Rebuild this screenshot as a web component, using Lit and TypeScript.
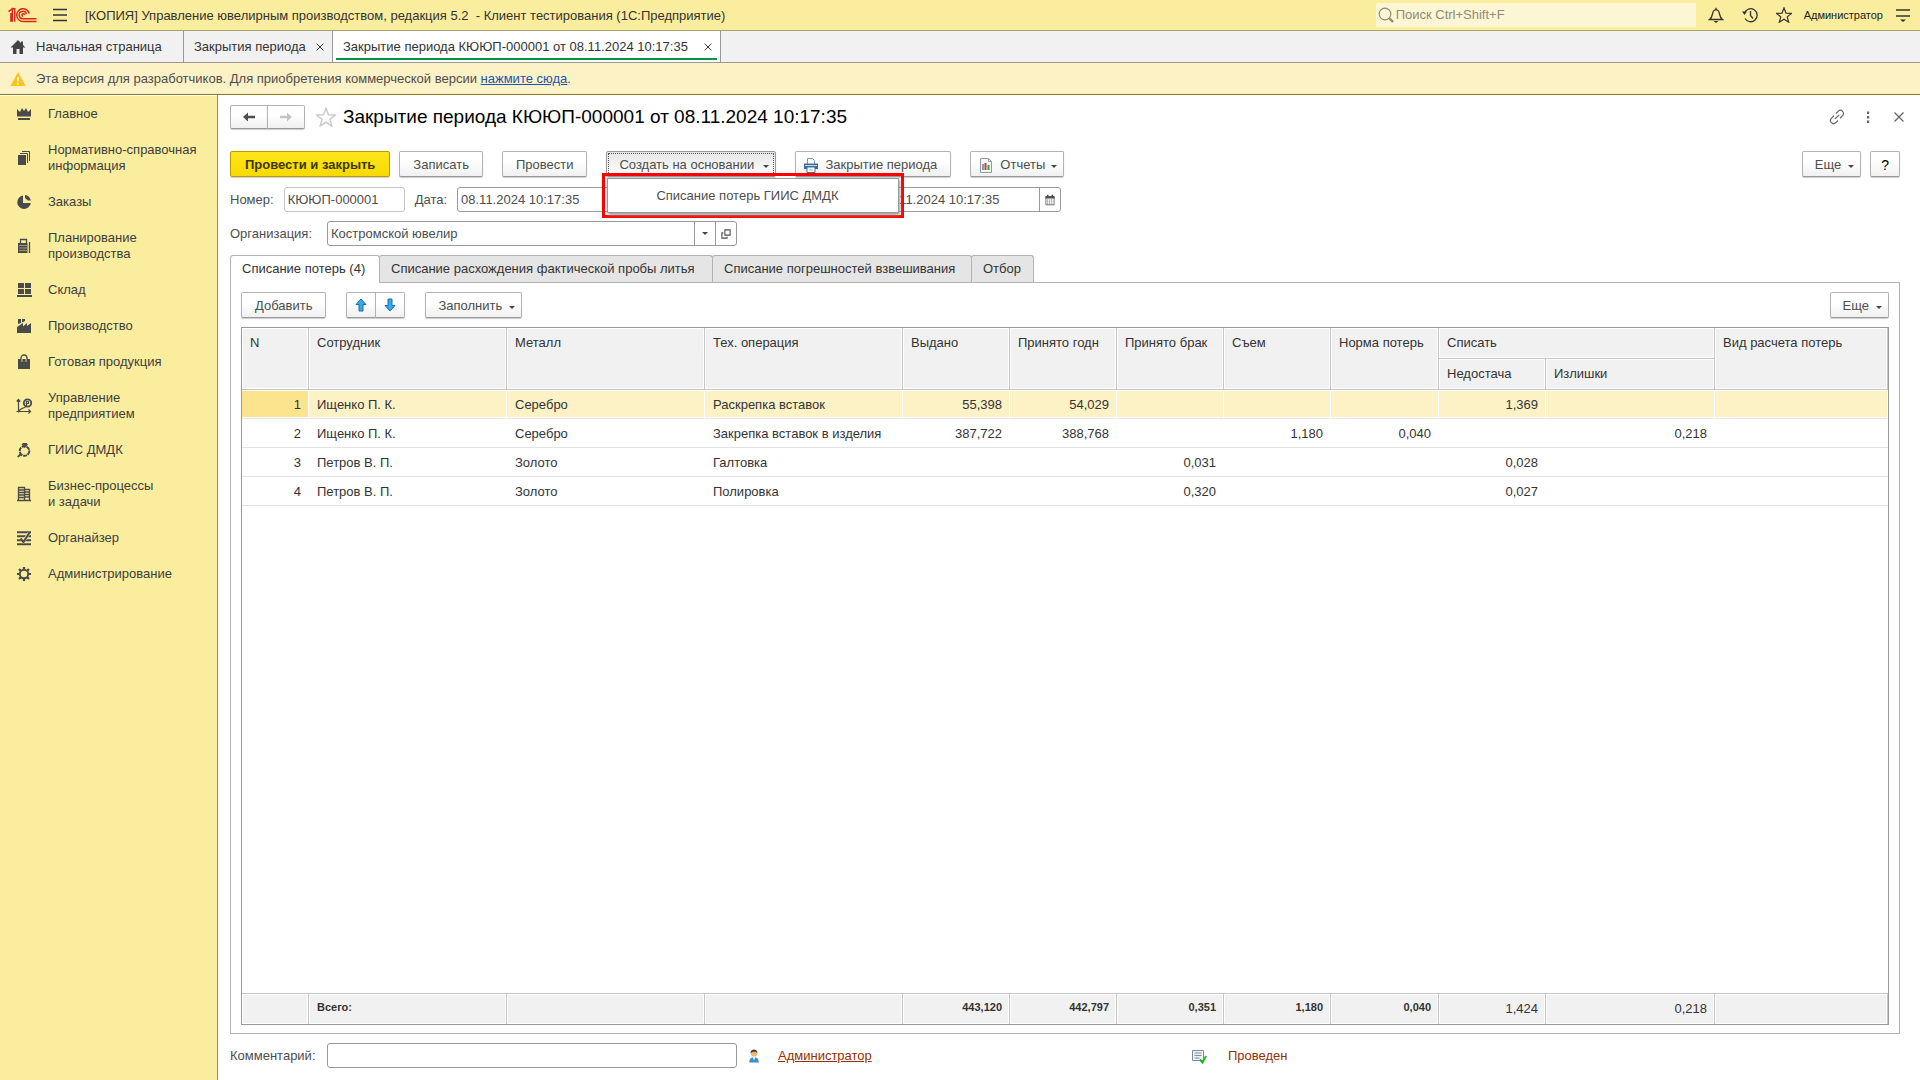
import { LitElement, html, css, svg, nothing, TemplateResult } from "lit";
import { customElement, property } from "lit/decorators.js";
import { classMap } from "lit/directives/class-map.js";

const glyphs: Record<string, TemplateResult> = {
  crown: svg`<path d="M1 3l3 3 2-4 2 3 2-3 2 4 3-3v7.500H1z"/><path d="M2 12h12v2H2z"/>`,
  files: svg`<path d="M2 5h8v10H2z"/><path d="M4 3.500h7.500V13M6 1.500h7.500V11" fill="none" stroke="currentColor"/>`,
  pie: svg`<path d="M7 1.500A6.800 6.800 0 1 0 14.800 9H7z"/><path d="M9 1c3 .3 5.300 2.600 5.800 5.500H12L9 4z"/>`,
  register: svg`<path d="M4.500 5V1.500h6V5M13.500 4v11" fill="none" stroke="currentColor" stroke-width="1.300"/><path d="M2 5h9.500v10H2z"/><path d="M3.500 7.500h7M3.500 10h7M3.500 12.500h7" stroke="#fbed9e" stroke-dasharray="1 1"/>`,
  blocks: svg`<path d="M2 1h6v5H2zM9 1h6v5H9zM2 7h6v5H2zM9 7h6v5H9zM1 13h15v2H1z"/>`,
  factory: svg`<path d="M2 1h3v4l-3 1zM6 1h3v2L6 4.500zM1 9l6-4v3.500L11 5v3l4-3v10H1z"/>`,
  bag: svg`<path d="M2 5h12v10H2z"/><path d="M5 6V4a3 3 0 0 1 6 0v2" fill="none" stroke="currentColor" stroke-width="1.300"/><path d="M6 5v3M10 5v3" stroke="#fbed9e" stroke-width=".8"/>`,
  chart: svg`<path d="M2.500 1.500v13M0.500 13.500H14M2.500 13c2-2 4-3 7-4M.8 3.500l1.700-2 1.700 2M12.500 11.500l2 2-2 2" fill="none" stroke="currentColor" stroke-width="1.200"/><circle cx="11.500" cy="5" r="3.700" fill="none" stroke="currentColor" stroke-width="1.800"/><path d="M10.500 8V3.500h2v2h-3" fill="none" stroke="currentColor" stroke-width="1.200"/>`,
  ring: svg`<circle cx="8.500" cy="9" r="4.800" fill="none" stroke="currentColor" stroke-width="2" stroke-dasharray="4 .8"/><path d="M5.500 2.500L7 1h3.500L12 2.500 8.700 6zM1 14.500L4.500 11l1.500 1.500-3.500 3z"/>`,
  building: svg`<path d="M2.500 14.500v-13h6v13M8.500 3.500h5v11M1 14.500h14M3 4h5M3 6.500h5M3 9h5M3 11.500h5M9 6h4M9 8.500h4M9 11h4" fill="none" stroke="currentColor" stroke-width="1.300"/>`,
  organizer: svg`<path d="M1 2.200h14M1 6.200h14M1 10.200h14M1 14.200h14" stroke="currentColor" stroke-width="2"/><path d="M5 8.500l2.500 3L13 3" fill="none" stroke="#fbed9e" stroke-width="3"/><path d="M4.500 8.500l3 3.500L13.500 2.500" fill="none" stroke="currentColor" stroke-width="2"/>`,
  gear: svg`<circle cx="8" cy="8" r="4.200" fill="none" stroke="currentColor" stroke-width="1.900"/><path d="M8 1v3M8 12v3M1 8h3M12 8h3M3 3l2 2M11 11l2 2M13 3l-2 2M5 11l-2 2" stroke="currentColor" stroke-width="2.200"/>`,
  home: svg`<path d="M8 1L.5 8.500H3V15h3.500v-5h3v5H13V8.500h2.500L13 6V2.500h-2V4z"/>`,
  warning: svg`<path d="M8 1l7.500 14H.5z" fill="#fcc419"/><path d="M8 6v4.500M8 12v1.600" stroke="#fff" stroke-width="1.500"/>`,
  burger: svg`<path d="M1 2.500h14M1 8h14M1 13.500h14" stroke="currentColor" stroke-width="1.300"/>`,
  search: svg`<circle cx="7" cy="7" r="5.800" fill="none" stroke="currentColor" stroke-width="1.200"/><path d="M11 11l4 4" stroke="currentColor" stroke-width="2.400"/>`,
  bell: svg`<path d="M1.500 12.500h13c-2-1.500-2.500-3-3-5.500-.3-2.500-1.300-4-3.500-4.300C5.800 3 4.800 4.500 4.500 7c-.5 2.500-1 4-3 5.500zM8 .8v2" fill="none" stroke="currentColor" stroke-width="1.300"/><path d="M5.500 14h5L8 16z"/>`,
  history: svg`<path d="M2.500 6A6.500 6.500 0 1 1 3 11.500M8.500 4v4.500l2.500 3" fill="none" stroke="currentColor" stroke-width="1.300"/><path d="M0 4.500h5L2.500 8z"/>`,
  star: svg`<path d="M8 1l2 5.200 5.500.2-4.300 3.500 1.500 5.300L8 12.200l-4.700 3 1.500-5.300L.5 6.400l5.500-.2z" fill="none" stroke="currentColor" stroke-width="1.200"/>`,
  menu: svg`<path d="M1 3h14M1 9h14" stroke="currentColor" stroke-width="1.300"/><path d="M5 12.500h6L8 15z"/>`,
  link: svg`<path d="M7 4.500l2.200-2.200a3 3 0 0 1 4.400 4.400L11 9.200M9 11.500l-2.200 2.200a3 3 0 0 1-4.400-4.400L5 6.800M5.800 10.200l4.400-4.400" fill="none" stroke="currentColor" stroke-width="1.200"/>`,
  dots: svg`<path d="M7 2.500h2.200v2.500H7zM7 7h2.200v2.500H7zM7 11.500h2.200V14H7z"/>`,
  close: svg`<path d="M3.500 3.500l9 9M12.500 3.500l-9 9" stroke="currentColor" stroke-width="1.300"/>`,
  left: svg`<path d="M2 8l5-4.500v3.300h7v2.400H7v3.300z"/>`,
  right: svg`<path d="M14 8L9 3.500v3.300H2v2.400h7v3.300z"/>`,
  up: svg`<path d="M8 2l5 5.500h-3V14H6V7.500H3z" fill="#38a9e8" stroke="#1b6fa8"/>`,
  down: svg`<path d="M8 14l5-5.500h-3V2H6v6.500H3z" fill="#38a9e8" stroke="#1b6fa8"/>`,
  printer: svg`<path d="M4.500 7V1.500h5l2 2V7" fill="#fff" stroke="#7d93a8"/><path d="M1 6.500h14V12H1z" fill="#3f6c97"/><path d="M2 8.500h12" stroke="#c7d6e4"/><path d="M4 10h8v5.500H4z" fill="#fff" stroke="#3f6c97"/><path d="M6 13h4" stroke="#9bb"/>`,
  report: svg`<path d="M2.500 1.500h8l3 3v11h-11z" fill="#f4f7fa" stroke="#8b9aab"/><path d="M10.500 1.500v3h3" fill="none" stroke="#8b9aab"/><path d="M5 7v6" stroke="#4a5a6a" stroke-width="1.200"/><path d="M7.500 6V13" stroke="#d33" stroke-width="2"/><path d="M10.500 8v5" stroke="#2a3" stroke-width="2"/>`,
  calendar: svg`<path d="M2.500 3.500h11v11h-11z" fill="none" stroke="currentColor"/><path d="M2 3h12v3H2zM4 1h2v3H4zM10 1h2v3h-2z"/><path d="M4 8h8M4 10.500h8M4 13h8" stroke="currentColor" stroke-dasharray="1.500 1"/>`,
  open: svg`<path d="M6.500 2.500h7v7h-7zM4.500 6.500h-2v7h7v-2" fill="none" stroke="currentColor" stroke-width="1.400"/>`,
  person: svg`<path d="M2.500 15.500c0-4 2-6 5.500-6s5.500 2 5.500 6z" fill="#3b8fc4"/><path d="M6.500 9.500L8 13l1.500-3.500z" fill="#fff"/><circle cx="8" cy="5" r="3.600" fill="#e9b872"/><path d="M4 5c-.3-6 8.300-6 8 0-1-2.500-6.500-2.500-8 0z" fill="#4b3a2c"/>`,
  posted: svg`<path d="M1.500 2.500h11v10h-11z" fill="#eef2f6" stroke="#7d8ea3"/><path d="M3.500 5h7M3.500 7.500h7M3.500 10h5" stroke="#7d8ea3"/><path d="M9 11.500l2.500 3 3.500-6.500" fill="none" stroke="#22b52c" stroke-width="2"/>`,
};

@customElement("ui-icon")
class UiIcon extends LitElement {
  static styles = css`
    :host { display: inline-flex; flex: none; width: 16px; height: 16px; }
    .glyph { width: 100%; height: 100%; fill: currentColor; }
  `;
  @property() name = "";
  render() {
    return html`<svg class="glyph" viewBox="0 0 16 16" aria-hidden="true">${glyphs[this.name]}</svg>`;
  }
}

interface Section { icon: string; lines: string[]; }

const sections: Section[] = [
  { icon: "crown", lines: ["Главное"] },
  { icon: "files", lines: ["Нормативно-справочная", "информация"] },
  { icon: "pie", lines: ["Заказы"] },
  { icon: "register", lines: ["Планирование", "производства"] },
  { icon: "blocks", lines: ["Склад"] },
  { icon: "factory", lines: ["Производство"] },
  { icon: "bag", lines: ["Готовая продукция"] },
  { icon: "chart", lines: ["Управление", "предприятием"] },
  { icon: "ring", lines: ["ГИИС ДМДК"] },
  { icon: "building", lines: ["Бизнес-процессы", "и задачи"] },
  { icon: "organizer", lines: ["Органайзер"] },
  { icon: "gear", lines: ["Администрирование"] },
];

const columnClasses = ["c-n", "c-text", "c-text", "c-text", "c-num", "c-num", "c-num", "c-num", "c-norm", "c-num", "c-extra", "c-kind"];
const headers = ["N", "Сотрудник", "Металл", "Тех. операция", "Выдано", "Принято годн", "Принято брак", "Съем", "Норма потерь"];
const rows = [
  ["1", "Ищенко П. К.", "Серебро", "Раскрепка вставок", "55,398", "54,029", "", "", "", "1,369", "", ""],
  ["2", "Ищенко П. К.", "Серебро", "Закрепка вставок в изделия", "387,722", "388,768", "", "1,180", "0,040", "", "0,218", ""],
  ["3", "Петров В. П.", "Золото", "Галтовка", "", "", "0,031", "", "", "0,028", "", ""],
  ["4", "Петров В. П.", "Золото", "Полировка", "", "", "0,320", "", "", "0,027", "", ""],
];
const totals = ["", "Всего:", "", "", "443,120", "442,797", "0,351", "1,180", "0,040", "1,424", "0,218", ""];
const isNumeric = (column: number) => column === 0 || (column > 3 && column < 11);

@customElement("app-root")
class AppRoot extends LitElement {
  static styles = css`
    :host {
      display: flex; flex-direction: column; min-height: 100vh; background: #fff;
      font: 13px/16px "Liberation Sans", Arial, sans-serif; color: #333;
    }
    * { box-sizing: border-box; }
    button, input { font: inherit; color: inherit; margin: 0; }
    button { cursor: pointer; white-space: nowrap; }
    .plain { display: inline-flex; align-items: center; justify-content: center; padding: 0; border: 0; background: none; }

    .titlebar { display: flex; align-items: center; height: 31px; padding: 0 9px 0 8px; background: #fbed9e; border-bottom: 1px solid #a9a468; }
    .logo { width: 29px; height: 16px; flex: none; }
    .titlebar .burger { margin-left: 15px; }
    .app-name { margin: 0 auto 0 17px; padding-top: 1px; white-space: pre; font-size: 13px; font-weight: 400; }
    .search { display: flex; align-items: center; gap: 2px; width: 320px; height: 24px; margin: 0 12px; margin-bottom: 1px; padding-left: 2px; border-radius: 2px; background: #fdf6d4; color: #8f8b77; }
    .search input { flex: 1; min-width: 0; padding: 0; border: 0; outline: 0; background: none; }
    .search input::placeholder { color: #8f8b77; opacity: 1; }
    .tools { display: flex; align-items: center; gap: 18px; }
    .user { margin-right: 12px; margin-left: 12px; font-size: 11px; color: #222; }

    .pages { display: flex; height: 32px; background: #f1f1f1; border-bottom: 1px solid #999; }
    .page { display: flex; align-items: center; justify-content: space-between; gap: 8px; min-width: 149px; padding: 0 6px 0 10px; border-right: 1px solid #999; white-space: nowrap; }
    .page.home { justify-content: flex-start; gap: 10px; min-width: 184px; }
    .page.home ui-icon { color: #444; }
    .page.active { min-width: 388px; background: linear-gradient(#009646, #009646) center 27px / calc(100% - 6px) 2px no-repeat #fff; }
    .page .shut ui-icon { width: 12px; height: 12px; }

    .notice { display: flex; align-items: center; gap: 10px; height: 32px; padding: 0 10px; background: #fdf1c6; border-bottom: 1px solid #8f7a20; color: #4d4d4d; }
    .notice a { color: #1c55ae; }

    .body { flex: 1; display: flex; }
    .sidebar { flex: none; width: 218px; padding-top: 1px; background: #fbed9e; border-right: 1px solid #999468; box-shadow: inset 0 1px #fff; }
    .section { display: flex; align-items: center; gap: 16px; padding: 10px 8px 10px 16px; color: #3d3d3d; text-decoration: none; white-space: nowrap; }
    .section ui-icon { color: #4a4a4a; }
    .section .line { display: block; }

    .main { flex: 1; min-width: 0; display: flex; flex-direction: column; padding: 10px 20px 12px 12px; color: #4d4d4d; }
    .heading { display: flex; align-items: center; height: 24px; margin: 0 -7px 22px 0; }
    .heading h1 { margin: 0 auto 0 7px; font-size: 19px; font-weight: 400; line-height: 24px; color: #000; }
    .heading .fav { margin-left: 11px; color: #ccc; }
    .heading .fav ui-icon { width: 20px; height: 20px; }
    .corner { display: flex; gap: 15px; color: #666; }

    .btn { display: inline-flex; align-items: center; height: 26px; padding: 1px 13px 0; border: 1px solid #b3b3b3; border-bottom-color: #999; border-radius: 2px; background: linear-gradient(#fff 40%, #f0f0f0); box-shadow: 0 1px 1px #ccc; color: #4d4d4d; }
    .btn.primary { padding: 1px 14px 0; background: linear-gradient(#ffe61a, #f7da00); border-color: #b39d00; font-weight: 700; color: #3d3600; }
    .btn.drop { justify-content: space-between; gap: 7px; padding-left: 12px; padding-right: 6px; }
    .btn.drop::after { content: ""; border: 3px solid transparent; border-top-color: #444; border-bottom: 0; margin-top: 3px; }
    .btn.pressed { min-width: 170px; background: linear-gradient(#e6e6e6, #fff); border-color: #999; outline: 1px dotted #555; outline-offset: -3px; }
    .btn.iconic { padding-left: 7px; gap: 6px; }
    .btn.narrow { padding: 1px 10px 0; color: #000; font-size: 14px; }
    .pair { display: flex; }
    .pair .btn { padding: 0 6px; width: 38px; justify-content: center; }
    .pair .btn:first-child { border-top-right-radius: 0; border-bottom-right-radius: 0; }
    .pair .btn:last-child { margin-left: -1px; border-top-left-radius: 0; border-bottom-left-radius: 0; }
    .pair.small .btn { width: 30px; }
    .heading .pair .btn { height: 24px; }
    .btn.disabled { color: #c4c4c4; }

    .commands { display: flex; gap: 19px; margin-bottom: 10px; }
    .commands .group { display: flex; gap: 9px; }
    .commands .end { margin-left: auto; }
    .anchor { position: relative; display: flex; }
    .frame { position: absolute; z-index: 2; top: 22px; left: -4px; width: 302px; padding: 2px; border: 3px solid #f00; }
    .menu { height: 35px; border: 1px solid #999; background: #fff; box-shadow: 1px 2px 3px #999; display: flex; }
    .menu button { flex: 1; justify-content: flex-start; padding: 0 48px; }

    .fields { display: flex; align-items: center; height: 25px; margin-bottom: 9px; }
    .fields label { flex: none; }
    .box { display: flex; height: 25px; border: 1px solid #999; border-radius: 3px; background: #fff; overflow: hidden; }
    .box.readonly { border-color: #c6c6c6; }
    .box input { flex: 1; min-width: 0; padding: 0 3px; border: 0; outline: 0; background: none; }
    .box button { width: 21px; border-left: 1px solid #999; }
    .box button ui-icon { width: 12px; height: 12px; }
    .number { width: 121px; margin: 0 10px 0 10px; }
    .date { width: 184px; margin-left: 10px; }
    .date.second { margin-left: 236px; }
    .wide { width: 410px; }
    .lead { width: 97px; }
    .caret { border: 3px solid transparent; border-top-color: #444; border-bottom: 0; }

    .tabs { display: flex; height: 28px; margin-bottom: -1px; }
    .tab { height: 27px; margin-right: -1px; padding: 0 11px; border: 1px solid #b3b3b3; border-bottom: 0; border-radius: 3px 3px 0 0; background: #e5e5e5; color: #333; text-align: left; }
    .tab.active { position: relative; z-index: 1; height: 28px; min-width: 150px; padding-bottom: 1px; background: #fff; }
    .tab.probe { min-width: 334px; }
    .tab.weighing { min-width: 260px; }
    .tab.filter { min-width: 63px; }
    .panel { flex: 1; display: flex; flex-direction: column; gap: 9px; margin-bottom: 9px; padding: 9px 10px 8px; border: 1px solid #b3b3b3; }
    .panel .commands { gap: 20px; margin: 0; }

    .grid-wrap { flex: 1; display: grid; border: 1px solid #999; }
    table { width: 100%; table-layout: fixed; border-collapse: separate; border-spacing: 0; color: #333; }
    .c-n { width: 67px; } .c-text { width: 198px; } .c-num { width: 107px; } .c-norm { width: 108px; } .c-extra { width: 169px; }
    th, td { padding: 0 8px; font-weight: 400; text-align: left; white-space: nowrap; overflow: hidden; }
    th, tfoot td { background: #f1f1f1; border-right: 1px solid #c6c6c6; box-shadow: inset 0 0 0 1px #fff; }
    th { height: 31px; padding: 7px 8px 5px; vertical-align: top; border-bottom: 1px solid #c6c6c6; }
    tbody td { height: 29px; padding-top: 1px; border-bottom: 1px solid #e3e3e3; }
    tbody td.num, tfoot td.num { text-align: right; }
    tr.current td { padding-right: 7px; background: #fdf1c6; border-right: 1px solid #fff; box-shadow: inset 0 1px #fff, inset 0 -1px #fff; }
    tr.current td:first-child { background: #fbe48d; }
    tbody tr.rest td { height: auto; border: 0; }
    tfoot td { height: 31px; padding: 0 7px 5px 8px; border-top: 1px solid #c6c6c6; font-size: 11px; font-weight: 700; }
    tfoot td.light { padding-bottom: 0; font-size: 13px; font-weight: 400; }

    .footer { display: flex; align-items: center; height: 25px; }
    .footer ui-icon { width: 14px; height: 14px; }
    .footer .author { display: flex; align-items: center; gap: 17px; width: 443px; margin-left: 10px; }
    .footer a, .footer .state { color: #963000; }
    .footer .status { display: flex; align-items: center; gap: 20px; }
    .footer .status ui-icon { width: 18px; height: 16px; }
  `;

  private section(item: Section) {
    return html`<a class="section" href="#"><ui-icon name=${item.icon}></ui-icon>
      <span>${item.lines.map((line) => html`<span class="line">${line}</span>`)}</span></a>`;
  }

  private row(cells: string[], index: number) {
    return html`<tr class=${classMap({ current: index === 0 })}>
      ${cells.map((cell, column) => html`<td class=${classMap({ num: isNumeric(column) })}>${cell}</td>`)}
    </tr>`;
  }

  private pageTab(title: string, active = false) {
    return html`<div class=${classMap({ page: true, active })}>
      <button class="plain">${title}</button>
      <button class="plain shut" aria-label="Закрыть"><ui-icon name="close"></ui-icon></button>
    </div>`;
  }

  render() {
    return html`
      <header class="titlebar">
        <svg class="logo" viewBox="0 0 30 16" role="img" aria-label="1С" fill="none" stroke="#d9261c" stroke-width="1.500">
          <path d="M.5 4.500L4.500 1.500V15M3 15V6M7 15V1.500H4.500" />
          <path d="M22 6.500a6.600 6.600 0 1 0-6.500 8.200H29.500" />
          <path d="M19 7a3.800 3.800 0 1 0-3.500 4.800H29.500" />
          <path d="M17 8.200a1.300 1.300 0 1 0-1.300 1" />
        </svg>
        <button class="plain burger" aria-label="Меню"><ui-icon name="burger"></ui-icon></button>
        <h2 class="app-name">[КОПИЯ] Управление ювелирным производством, редакция 5.2  - Клиент тестирования (1С:Предприятие)</h2>
        <div class="search"><ui-icon name="search"></ui-icon><input type="search" aria-label="Поиск" placeholder="Поиск Ctrl+Shift+F" /></div>
        <div class="tools">
          <button class="plain" aria-label="Уведомления"><ui-icon name="bell"></ui-icon></button>
          <button class="plain" aria-label="История"><ui-icon name="history"></ui-icon></button>
          <button class="plain" aria-label="Избранное"><ui-icon name="star"></ui-icon></button>
        </div>
        <button class="plain user">Администратор</button>
        <button class="plain" aria-label="Настройки"><ui-icon name="menu"></ui-icon></button>
      </header>

      <nav class="pages">
        <div class="page home"><ui-icon name="home"></ui-icon><button class="plain">Начальная страница</button></div>
        ${this.pageTab("Закрытия периода")}
        ${this.pageTab("Закрытие периода КЮЮП-000001 от 08.11.2024 10:17:35", true)}
      </nav>

      <div class="notice"><ui-icon name="warning"></ui-icon>
        <span>Эта версия для разработчиков. Для приобретения коммерческой версии <a href="#">нажмите сюда</a>.</span></div>

      <div class="body">
        <nav class="sidebar">${sections.map((item) => this.section(item))}</nav>
        <main class="main">
          <div class="heading">
            <div class="pair">
              <button class="btn" aria-label="Назад"><ui-icon name="left"></ui-icon></button>
              <button class="btn disabled" aria-label="Вперед"><ui-icon name="right"></ui-icon></button>
            </div>
            <button class="plain fav" aria-label="В избранное"><ui-icon name="star"></ui-icon></button>
            <h1>Закрытие периода КЮЮП-000001 от 08.11.2024 10:17:35</h1>
            <div class="corner">
              <button class="plain" aria-label="Ссылка"><ui-icon name="link"></ui-icon></button>
              <button class="plain" aria-label="Действия"><ui-icon name="dots"></ui-icon></button>
              <button class="plain" aria-label="Закрыть"><ui-icon name="close"></ui-icon></button>
            </div>
          </div>

          <div class="commands">
            <div class="group">
              <button class="btn primary">Провести и закрыть</button>
              <button class="btn">Записать</button>
            </div>
            <button class="btn">Провести</button>
            <div class="anchor">
              <button class="btn drop pressed" aria-expanded="true">Создать на основании</button>
              <div class="frame"><div class="menu" role="menu"><button class="plain" role="menuitem">Списание потерь ГИИС ДМДК</button></div></div>
            </div>
            <button class="btn iconic"><ui-icon name="printer"></ui-icon>Закрытие периода</button>
            <button class="btn drop iconic"><ui-icon name="report"></ui-icon>Отчеты</button>
            <div class="group end">
              <button class="btn drop">Еще</button>
              <button class="btn narrow">?</button>
            </div>
          </div>

          <div class="fields">
            <label for="number">Номер:</label>
            <div class="box readonly number"><input id="number" readonly .value=${"КЮЮП-000001"} /></div>
            <label for="date">Дата:</label>
            <div class="box date"><input id="date" .value=${"08.11.2024 10:17:35"} />
              <button class="plain" aria-label="Календарь"><ui-icon name="calendar"></ui-icon></button></div>
            <div class="box date second"><input aria-label="Дата" .value=${"08.11.2024 10:17:35"} />
              <button class="plain" aria-label="Календарь"><ui-icon name="calendar"></ui-icon></button></div>
          </div>
          <div class="fields">
            <label class="lead" for="org">Организация:</label>
            <div class="box wide"><input id="org" .value=${"Костромской ювелир"} />
              <button class="plain" aria-label="Выбрать"><span class="caret"></span></button>
              <button class="plain" aria-label="Открыть"><ui-icon name="open"></ui-icon></button></div>
          </div>

          <div class="tabs" role="tablist">
            <button class="tab active" role="tab" aria-selected="true">Списание потерь (4)</button>
            <button class="tab probe" role="tab">Списание расхождения фактической пробы литья</button>
            <button class="tab weighing" role="tab">Списание погрешностей взвешивания</button>
            <button class="tab filter" role="tab">Отбор</button>
          </div>
          <section class="panel">
            <div class="commands">
              <button class="btn">Добавить</button>
              <div class="pair small">
                <button class="btn" aria-label="Вверх"><ui-icon name="up"></ui-icon></button>
                <button class="btn" aria-label="Вниз"><ui-icon name="down"></ui-icon></button>
              </div>
              <button class="btn drop">Заполнить</button>
              <button class="btn drop end">Еще</button>
            </div>
            <div class="grid-wrap">
              <table>
                <colgroup>${columnClasses.map((name) => html`<col class=${name} />`)}</colgroup>
                <thead>
                  <tr>
                    ${headers.map((title) => html`<th rowspan="2">${title}</th>`)}
                    <th colspan="2">Списать</th>
                    <th rowspan="2">Вид расчета потерь</th>
                  </tr>
                  <tr><th>Недостача</th><th>Излишки</th></tr>
                </thead>
                <tbody>
                  ${rows.map((cells, index) => this.row(cells, index))}
                  <tr class="rest"><td colspan="12">${nothing}</td></tr>
                </tbody>
                <tfoot>
                  <tr>${totals.map((cell, column) => html`<td class=${classMap({ num: isNumeric(column), light: column > 8 })}>${cell}</td>`)}</tr>
                </tfoot>
              </table>
            </div>
          </section>

          <footer class="footer">
            <label class="lead" for="comment">Комментарий:</label>
            <div class="box wide"><input id="comment" /></div>
            <div class="author"><ui-icon name="person"></ui-icon><a href="#">Администратор</a></div>
            <div class="status"><ui-icon name="posted"></ui-icon><span class="state">Проведен</span></div>
          </footer>
        </main>
      </div>
    `;
  }
}
